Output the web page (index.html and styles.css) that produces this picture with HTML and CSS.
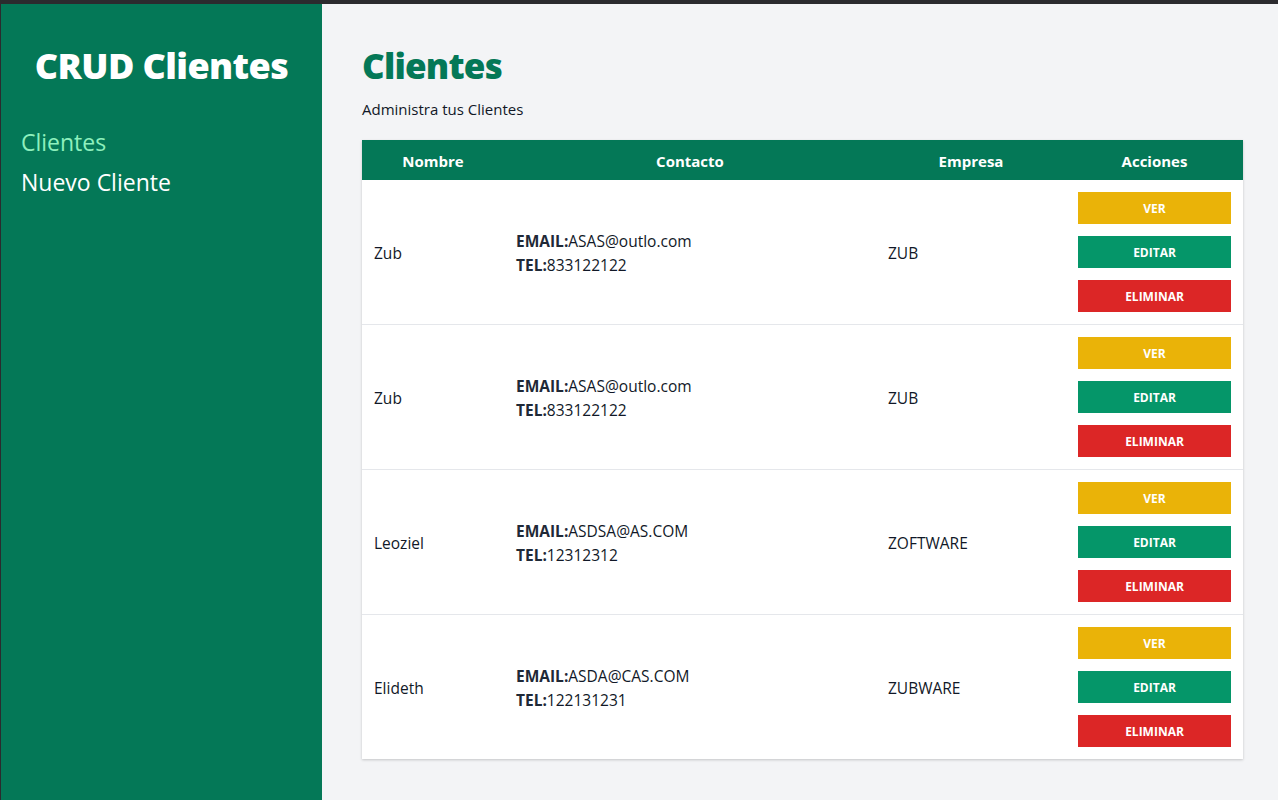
FILE: index.html
```html
<!DOCTYPE html>
<html lang="es">
<head>
<meta charset="utf-8">
<title>CRUD Clientes</title>
<link rel="stylesheet" href="styles.css">
</head>
<body>
<div class="frame">
  <aside class="sidebar">
    <h2 class="brand">CRUD Clientes</h2>
    <nav class="nav">
      <a class="nav-link active" href="#">Clientes</a>
      <a class="nav-link" href="#">Nuevo Cliente</a>
    </nav>
  </aside>
  <main class="main">
    <h1 class="title">Clientes</h1>
    <p class="subtitle">Administra tus Clientes</p>
    <table class="table">
      <thead>
        <tr>
          <th class="c-name">Nombre</th>
          <th class="c-contact">Contacto</th>
          <th class="c-company">Empresa</th>
          <th class="c-actions">Acciones</th>
        </tr>
      </thead>
      <tbody>
        <tr>
          <td>Zub</td>
          <td><p class="line"><b>EMAIL:</b>ASAS@outlo.com</p><p class="line"><b>TEL:</b>833122122</p></td>
          <td>ZUB</td>
          <td class="actions"><a class="btn ver" href="#">Ver</a><a class="btn editar" href="#">Editar</a><a class="btn eliminar" href="#">Eliminar</a></td>
        </tr>
        <tr>
          <td>Zub</td>
          <td><p class="line"><b>EMAIL:</b>ASAS@outlo.com</p><p class="line"><b>TEL:</b>833122122</p></td>
          <td>ZUB</td>
          <td class="actions"><a class="btn ver" href="#">Ver</a><a class="btn editar" href="#">Editar</a><a class="btn eliminar" href="#">Eliminar</a></td>
        </tr>
        <tr>
          <td>Leoziel</td>
          <td><p class="line"><b>EMAIL:</b>ASDSA@AS.COM</p><p class="line"><b>TEL:</b>12312312</p></td>
          <td>ZOFTWARE</td>
          <td class="actions"><a class="btn ver" href="#">Ver</a><a class="btn editar" href="#">Editar</a><a class="btn eliminar" href="#">Eliminar</a></td>
        </tr>
        <tr>
          <td>Elideth</td>
          <td><p class="line"><b>EMAIL:</b>ASDA@CAS.COM</p><p class="line"><b>TEL:</b>122131231</p></td>
          <td>ZUBWARE</td>
          <td class="actions"><a class="btn ver" href="#">Ver</a><a class="btn editar" href="#">Editar</a><a class="btn eliminar" href="#">Eliminar</a></td>
        </tr>
      </tbody>
    </table>
  </main>
</div>
</body>
</html>
```

FILE: styles.css
```css
* { box-sizing: border-box; }
html, body { margin: 0; padding: 0; height: 100%; }
body {
  font-family: "Open Sans", "Noto Sans", "Liberation Sans", sans-serif;
  color: #111827;
  background: #f3f4f6;
  border-top: 4px solid #2b2b2e;
  border-left: 1px solid #2b2b2e;
  overflow: hidden;
}
.frame {
  display: flex;
  height: 796px;
}
.sidebar {
  width: 321px;
  flex-shrink: 0;
  background: #047857;
  padding: 42px 20px 40px;
}
.brand {
  margin: 0;
  text-align: center;
  color: #fff;
  font-size: 36px;
  line-height: 40px;
  font-weight: 800;
  letter-spacing: -0.6px;
}
.nav {
  margin-top: 40px;
  display: flex;
  flex-direction: column;
  gap: 8px;
}
.nav-link {
  color: #fff;
  text-decoration: none;
  font-size: 23px;
  line-height: 32px;
}
.nav-link.active { color: #8ef0bd; }
.main {
  flex: 1;
  padding: 42px 35px 40px 40px;
}
.title {
  margin: 0;
  color: #047857;
  font-size: 35px;
  line-height: 40px;
  font-weight: 800;
  letter-spacing: -0.8px;
}
.subtitle {
  margin: 11px 0 0;
  font-size: 15px;
  line-height: 24px;
}
.table {
  margin-top: 19px;
  width: 881px;
  border-collapse: collapse;
  background: #fff;
  box-shadow: 0 1px 3px rgba(0,0,0,0.12), 0 1px 2px rgba(0,0,0,0.08);
  font-size: 15.5px;
}
.table thead tr { background: #047857; }
.table th {
  color: #fff;
  font-weight: 700;
  font-size: 15px;
  height: 40px;
  padding: 2px 12px 0;
  text-align: center;
}
.c-name { width: 142px; }
.c-contact { width: 372px; }
.c-company { width: 190px; }
.c-actions { width: 177px; }
.table td {
  padding: 13px 12px 11px;
  vertical-align: middle;
  border-bottom: 1px solid #e5e7eb;
}
.table td.actions { padding: 12px; }
.table tbody tr:last-child td { border-bottom: none; }
.line { margin: 0; line-height: 24px; }
.line b { font-weight: 700; color: #1f2937; }
.actions .btn {
  display: block;
  height: 32px;
  padding-top: 1px;
  line-height: 31px;
  text-align: center;
  color: #fff;
  font-size: 12px;
  font-weight: 700;
  text-transform: uppercase;
  text-decoration: none;
}
.actions .btn + .btn { margin-top: 12px; }
.btn.ver { background: #eab308; }
.btn.editar { background: #059669; }
.btn.eliminar { background: #dc2626; }
```
